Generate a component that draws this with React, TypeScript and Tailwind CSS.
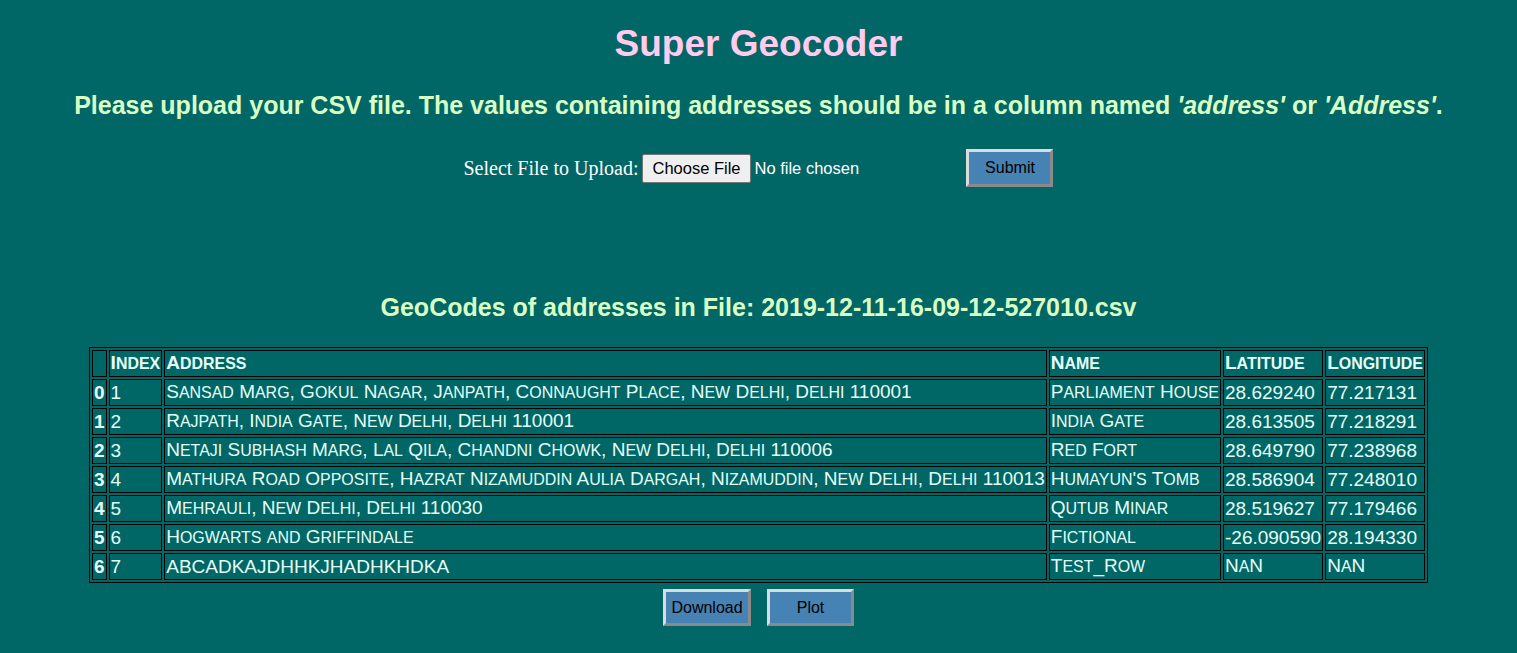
import React from "react";

const rows = [
  { i: "0", idx: "1", address: "Sansad Marg, Gokul Nagar, Janpath, Connaught Place, New Delhi, Delhi 110001", name: "Parliament House", lat: "28.629240", lng: "77.217131" },
  { i: "1", idx: "2", address: "Rajpath, India Gate, New Delhi, Delhi 110001", name: "India Gate", lat: "28.613505", lng: "77.218291" },
  { i: "2", idx: "3", address: "Netaji Subhash Marg, Lal Qila, Chandni Chowk, New Delhi, Delhi 110006", name: "Red Fort", lat: "28.649790", lng: "77.238968" },
  { i: "3", idx: "4", address: "Mathura Road Opposite, Hazrat Nizamuddin Aulia Dargah, Nizamuddin, New Delhi, Delhi 110013", name: "Humayun's Tomb", lat: "28.586904", lng: "77.248010" },
  { i: "4", idx: "5", address: "Mehrauli, New Delhi, Delhi 110030", name: "Qutub Minar", lat: "28.519627", lng: "77.179466" },
  { i: "5", idx: "6", address: "Hogwarts and Griffindale", name: "Fictional", lat: "-26.090590", lng: "28.194330" },
  { i: "6", idx: "7", address: "ABCADKAJDHHKJHADHKHDKA", name: "Test_Row", lat: "NaN", lng: "NaN" },
];

// small caps drawn by hand: lowercase runs become smaller capitals
function SmallCaps({ text }: { text: string }) {
  const parts = text.split(/([a-z]+)/);
  return (
    <>
      {parts.map((p, k) =>
        /^[a-z]+$/.test(p) ? (
          <span key={k} className="text-[0.84em] uppercase">
            {p}
          </span>
        ) : (
          <React.Fragment key={k}>{p}</React.Fragment>
        )
      )}
    </>
  );
}

const cell = "border border-black px-[1px] py-0 text-left align-middle whitespace-nowrap";
const btn =
  "bg-[#4682b4] text-black text-base border-[3px] border-t-[#dcdcdc] border-l-[#dcdcdc] border-b-[#8a8a8a] border-r-[#8a8a8a]";

export default function App() {
  return (
    <div className="min-h-screen bg-[#006666] font-['Liberation_Sans',Arial,sans-serif] pb-6">
      <h1 className="pt-[22px] text-center text-[37px] leading-[44px] font-bold text-[#ffccee]">
        Super Geocoder
      </h1>
      <h2 className="mt-[25px] text-center text-[25px] leading-[29px] font-bold text-[#d9ffc4]">
        Please upload your CSV file. The values containing addresses should be in a column named{" "}
        <em>'address'</em> or <em>'Address'</em>.
      </h2>

      <form className="mt-[29px] flex items-center justify-center">
        <span className="font-['Liberation_Serif',serif] text-[20px] text-white">Select File to Upload:</span>
        <label className="ml-[4px] flex items-center w-[318px]">
          <span className="h-[29px] px-[9px] flex items-center bg-[#efefef] border border-[#767676] rounded-[2px] text-black text-[16.5px]">
            Choose File
          </span>
          <span className="ml-[4px] text-white text-[16.5px]">No file chosen</span>
        </label>
        <button type="button" className={`${btn} w-[87px] h-[38px] ml-[6px]`}>
          Submit
        </button>
      </form>

      <h3 className="mt-[105px] text-center text-[25px] leading-[30px] font-bold text-[#d9ffc4]">
        GeoCodes of addresses in File: 2019-12-11-16-09-12-527010.csv
      </h3>

      <table className="mx-auto mt-[25px] border border-black border-separate border-spacing-[2px] text-[19px] leading-[24px] text-[#e6fff8]">
        <thead>
          <tr>
            <th className={cell}></th>
            <th className={cell}><SmallCaps text="Index" /></th>
            <th className={cell}><SmallCaps text="Address" /></th>
            <th className={cell}><SmallCaps text="Name" /></th>
            <th className={cell}><SmallCaps text="Latitude" /></th>
            <th className={cell}><SmallCaps text="Longitude" /></th>
          </tr>
        </thead>
        <tbody>
          {rows.map((r) => (
            <tr key={r.i}>
              <th className={cell}>{r.i}</th>
              <td className={cell}>{r.idx}</td>
              <td className={cell}><SmallCaps text={r.address} /></td>
              <td className={cell}><SmallCaps text={r.name} /></td>
              <td className={cell}><SmallCaps text={r.lat} /></td>
              <td className={cell}><SmallCaps text={r.lng} /></td>
            </tr>
          ))}
        </tbody>
      </table>

      <div className="mt-[6px] flex justify-center gap-[16px]">
        <button type="button" className={`${btn} w-[88px] h-[37px]`}>
          Download
        </button>
        <button type="button" className={`${btn} w-[87px] h-[37px]`}>
          Plot
        </button>
      </div>
    </div>
  );
}
